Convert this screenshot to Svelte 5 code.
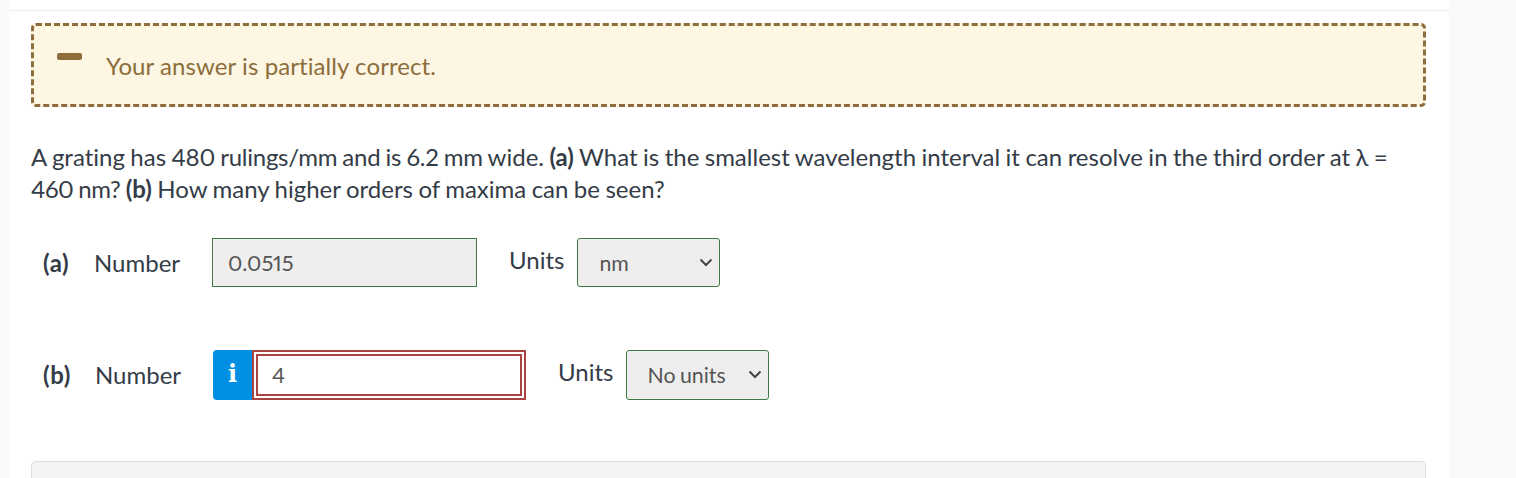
<script>
  let a = $state('0.0515');
  let b = $state('4');
</script>

<main class="card">
  <div class="alert">
    <span class="dash"></span>
    <span class="alert-text">Your answer is partially correct.</span>
  </div>

  <p class="question">A grating has <span class="tight">480 rulings/mm and is 6.2 mm</span> wide. <b>(a)</b> What is the smallest wavelength interval it can resolve in the third order at λ = <span class="tighter">460 nm?</span> <b>(b)</b> How many higher orders of maxima can be seen?</p>

  <div class="row row-a">
    <b class="part">(a)</b>
    <span class="label">Number</span>
    <input class="num correct" bind:value={a} />
    <span class="units">Units</span>
    <span class="sel-wrap sel-a">
      <select class="sel"><option>nm</option></select>
      <svg class="chev" width="14" height="9" viewBox="0 0 14 9"><path d="M1.5 1.5 7 7l5.5-5.5" fill="none" stroke="#444" stroke-width="2"/></svg>
    </span>
  </div>

  <div class="row row-b">
    <b class="part">(b)</b>
    <span class="label">Number</span>
    <span class="info">i</span>
    <span class="wrong-wrap"><input class="num wrong" bind:value={b} /></span>
    <span class="units">Units</span>
    <span class="sel-wrap sel-b">
      <select class="sel"><option>No units</option></select>
      <svg class="chev" width="14" height="9" viewBox="0 0 14 9"><path d="M1.5 1.5 7 7l5.5-5.5" fill="none" stroke="#444" stroke-width="2"/></svg>
    </span>
  </div>

  <div class="panel"></div>
</main>

<style>
  :global(body) {
    margin: 0;
    background: #fafafa;
    overflow: hidden;
  }
  .card {
    box-sizing: border-box;
    width: 1440px;
    height: 478px;
    margin-left: 9px;
    padding: 13px 23px 0 22px;
    background: #fff;
    font-family: Lato, "Open Sans", sans-serif;
    font-variant-ligatures: none;
    font-variant-numeric: proportional-nums;
    color: #333c47;
  }
  .card::before {
    content: "";
    display: block;
    height: 1px;
    background: #eeeeee;
    margin: -3px -23px 12px -22px;
  }
  .alert {
    box-sizing: border-box;
    height: 84px;
    width: 1395px;
    display: flex;
    align-items: center;
    padding: 1px 0 0 23px;
    background: #fdf6e2;
    border: 3px dashed #8c6d3b;
    border-radius: 5px;
    color: #8c6d3b;
    font-size: 24px;
    letter-spacing: 0.08px;
  }
  .dash {
    width: 25px;
    height: 7px;
    border-radius: 2px;
    background: #8c6d3b;
    margin-right: 24px;
    margin-top: -18px;
  }
  .alert-text { line-height: 32px; }
  .question {
    margin: 34px 0 0;
    width: 1395px;
    font-size: 24px;
    line-height: 32px;
    word-spacing: -0.7px;
  }
  .tight { letter-spacing: -0.25px; }
  .tighter { letter-spacing: -0.45px; }
  .question b, .part { font-weight: 700; }
  .row {
    display: flex;
    align-items: center;
    font-size: 24px;
    padding-left: 12px;
  }
  .row-a { margin-top: 33px; height: 49px; }
  .row-b { margin-top: 63px; height: 50px; }
  .part { width: 51px; letter-spacing: 0.6px; }
  .label { width: 118px; }
  .row-b .part { width: 52px; }
  .row-b .label { margin-top: -1px; }
  .row-b .part { margin-top: -1px; }
  .num {
    box-sizing: border-box;
    font: 21.8px Lato, sans-serif;
    font-variant-numeric: proportional-nums;
    color: #555;
    outline: none;
    margin: 0;
  }
  .correct {
    width: 265px;
    height: 49px;
    padding: 0 15px;
    background: #eeeeee;
    border: 1px solid #3f7a42;
  }
  .units { margin-top: -6px; }
  .row-a .units { margin-left: 32px; margin-right: 13px; }
  .row-b .units { margin-left: 32px; margin-right: 13px; margin-top: -8px; }
  .sel-wrap {
    display: block;
    position: relative;
    box-sizing: border-box;
    width: 143px;
  }
  .sel-a { height: 49px; }
  .sel-b { height: 50px; }
  .sel {
    appearance: none;
    display: block;
    box-sizing: border-box;
    width: 100%;
    height: 100%;
    font: 21.3px Lato, sans-serif;
    word-spacing: -1px;
    color: #555;
    background-color: #eeeeee;
    border: 1px solid #3f7a42;
    border-radius: 3px;
    margin: 0;
    padding: 0 0 0 21px;
  }
  .sel-b .sel { padding-left: 20px; }
  .chev {
    position: absolute;
    right: 7px;
    top: 20px;
    pointer-events: none;
  }
  .info {
    box-sizing: border-box;
    width: 39px;
    height: 50px;
    background: #008fe2;
    color: #fff;
    border-radius: 4px 0 0 4px;
    font: 700 24px "DejaVu Serif", serif;
    display: flex;
    align-items: center;
    justify-content: center;
    padding-bottom: 4px;
  }
  .wrong-wrap {
    box-sizing: border-box;
    display: flex;
    width: 274px;
    height: 50px;
    border: 2px solid #a94442;
    padding: 2px;
    background: #fff;
  }
  .wrong {
    width: 100%;
    height: 100%;
    border: 2px solid #a94442;
    padding: 0 14px 2px;
    background: #fff;
  }
  .panel {
    box-sizing: border-box;
    width: 1395px;
    height: 40px;
    margin-top: 61px;
    background: #f4f4f4;
    border: 1px solid #dddddd;
    border-radius: 5px 5px 0 0;
  }
</style>
